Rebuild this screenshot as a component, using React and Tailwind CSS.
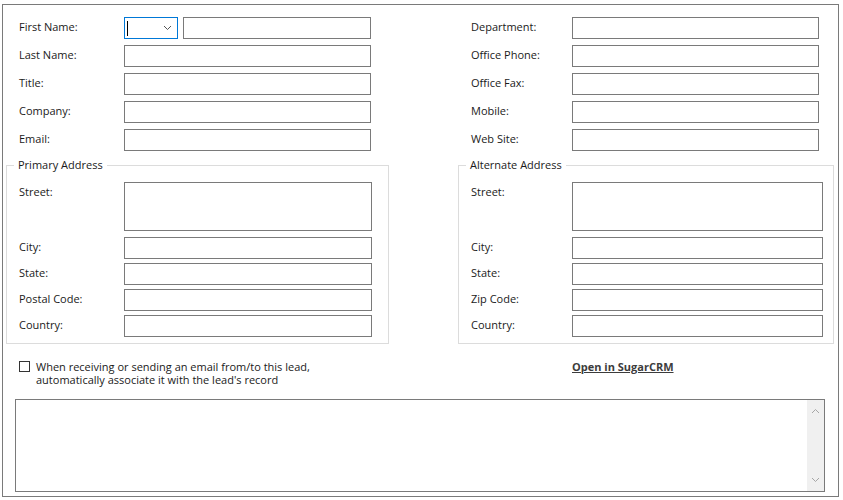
import React from "react";

const font = { fontFamily: '"Segoe UI", "Open Sans", "Noto Sans", sans-serif' };

function Field({ label, labelW, inputW }) {
  return (
    <div className="flex items-center h-[22px]">
      <div className={`${labelW} text-[11px] leading-[16px] pb-[2px] text-[#1a1a1a]`}>{label}</div>
      <div className={`${inputW} h-[22px] border border-[#7a7a7a] bg-white`} />
    </div>
  );
}

function Chevron({ up }) {
  return (
    <svg width="9" height="6" viewBox="0 0 9 6" className="block">
      {up ? (
        <path d="M1 5 L4.5 1.5 L8 5" fill="none" stroke="#a6a6a6" strokeWidth="1" />
      ) : (
        <path d="M1 1 L4.5 4.5 L8 1" fill="none" stroke="#a6a6a6" strokeWidth="1" />
      )}
    </svg>
  );
}

function Group({ title, width, labelW, inputW, zipLabel, pr }) {
  const rows = ["City:", "State:", zipLabel, "Country:"];
  return (
    <fieldset className={`${width} ${pr} border border-[#dcdcdc] pl-[12px] pb-[6px] pt-[9px] m-0 min-w-0`}>
      <legend className="ml-[-5px] px-[4px] text-[11px] leading-[16px] text-[#1a1a1a] mt-[1px]">{title}</legend>
      <div className="flex flex-col">
        <div className="flex">
          <div className={`${labelW} h-[22px] flex items-center pb-[2px] text-[11px] leading-[16px] text-[#1a1a1a]`}>Street:</div>
          <div className={`${inputW} h-[49px] border border-[#7a7a7a] bg-white`} />
        </div>
        <div className="flex flex-col gap-[4px] mt-[6px]">
          {rows.map((r) => (
            <Field key={r} label={r} labelW={labelW} inputW={inputW} />
          ))}
        </div>
      </div>
    </fieldset>
  );
}

export default function App() {
  return (
    <div className="w-[843px] h-[500px] bg-white pt-[4px] pl-[2px]" style={font}>
      <div className="w-[837px] h-[493px] border border-[#7a7a7a] flex flex-col">
        {/* top fields */}
        <div className="flex pt-[12px]">
          <div className="ml-[16px] w-[352px] flex flex-col gap-[6px]">
            <div className="flex items-center h-[22px]">
              <div className="w-[105px] text-[11px] leading-[16px] pb-[2px] text-[#1a1a1a]">First Name:</div>
              <div className="w-[54px] h-[22px] border border-[#0078d7] flex items-center justify-between pl-[2px] pr-[5px]">
                <div className="w-[1px] h-[15px] bg-black" />
                <svg width="9" height="6" viewBox="0 0 9 6" className="block">
                  <path d="M1 1 L4.5 4.5 L8 1" fill="none" stroke="#555" strokeWidth="1" />
                </svg>
              </div>
              <div className="ml-[5px] w-[188px] h-[22px] border border-[#7a7a7a]" />
            </div>
            <Field label="Last Name:" labelW="w-[105px]" inputW="w-[247px]" />
            <Field label="Title:" labelW="w-[105px]" inputW="w-[247px]" />
            <Field label="Company:" labelW="w-[105px]" inputW="w-[247px]" />
            <Field label="Email:" labelW="w-[105px]" inputW="w-[247px]" />
          </div>
          <div className="ml-[100px] flex flex-col gap-[6px]">
            <Field label="Department:" labelW="w-[101px]" inputW="w-[247px]" />
            <Field label="Office Phone:" labelW="w-[101px]" inputW="w-[247px]" />
            <Field label="Office Fax:" labelW="w-[101px]" inputW="w-[247px]" />
            <Field label="Mobile:" labelW="w-[101px]" inputW="w-[247px]" />
            <Field label="Web Site:" labelW="w-[101px]" inputW="w-[247px]" />
          </div>
        </div>

        {/* address groups */}
        <div className="flex ml-[3px] mt-[6px]">
          <Group title="Primary Address" width="w-[383px]" pr="pr-[12px]" labelW="w-[105px]" inputW="w-[248px]" zipLabel="Postal Code:" />
          <div className="ml-[69px]">
            <Group title="Alternate Address" width="w-[376px]" pr="pr-[10px]" labelW="w-[101px]" inputW="w-[251px]" zipLabel="Zip Code:" />
          </div>
        </div>

        {/* checkbox + link */}
        <div className="flex mt-[16px] text-[11px] leading-[13px]">
          <div className="ml-[16px] w-[352px] flex items-start">
            <div className="mt-[1px] w-[11px] h-[11px] border border-[#333] bg-white shrink-0" />
            <div className="ml-[6px] text-[11px] leading-[13px] text-[#1a1a1a]">
              When receiving or sending an email from/to this lead,
              <br />
              automatically associate it with the lead's record
            </div>
          </div>
          <div className="ml-[100px] pl-[101px]">
            <span className="block text-[11px] leading-[13px] font-bold underline text-[#3c3c3c]">Open in SugarCRM</span>
          </div>
        </div>

        {/* notes area */}
        <div className="ml-[12px] mt-[13px] w-[810px] h-[93px] border border-[#7a7a7a] flex">
          <div className="flex-1" />
          <div className="w-[17px] bg-[#f0f0f0] flex flex-col items-center justify-between py-[8px]">
            <Chevron up />
            <Chevron />
          </div>
        </div>
      </div>
    </div>
  );
}
